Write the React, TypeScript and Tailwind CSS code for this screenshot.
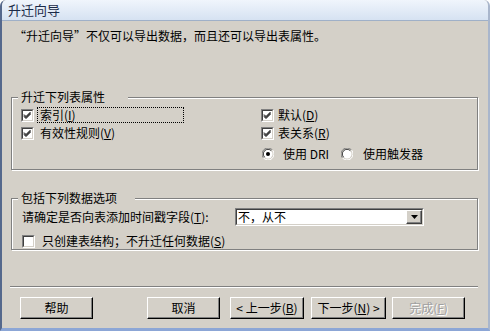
import React from "react";

const FONT = { fontFamily: '"Noto Sans CJK SC", "Noto Sans", sans-serif' };

function CheckBox({ checked }: { checked: boolean }) {
  return (
    <div className="w-[13px] h-[13px] shrink-0 border-t border-l border-t-[#808080] border-l-[#808080] border-b border-r border-b-white border-r-white">
      <div className="w-[11px] h-[11px] border-t border-l border-t-[#404040] border-l-[#404040] border-b border-r border-b-[#d4d0c8] border-r-[#d4d0c8] bg-white relative">
        {checked && (
          <svg width="9" height="9" viewBox="0 0 9 9" className="absolute left-0 top-0">
            <path d="M1 3.5 L3 5.5 L7.5 1 M1 4.5 L3 6.5 L7.5 2 M1 5.5 L3 7.5 L7.5 3" stroke="#000" strokeWidth="1" fill="none" />
          </svg>
        )}
      </div>
    </div>
  );
}

function Radio({ checked }: { checked: boolean }) {
  return (
    <svg width="12" height="12" viewBox="0 0 12 12" className="shrink-0">
      <path d="M10.5 2 A5.5 5.5 0 0 0 1.5 10" stroke="#808080" strokeWidth="1" fill="none" />
      <path d="M1.5 10 A5.5 5.5 0 0 0 10.5 2" stroke="#ffffff" strokeWidth="1" fill="none" />
      <circle cx="6" cy="6" r="4.5" fill="#ffffff" />
      <path d="M9.3 2.7 A4.5 4.5 0 0 0 2.7 9.3" stroke="#404040" strokeWidth="1" fill="none" />
      {checked && <circle cx="6" cy="6" r="2" fill="#000" />}
    </svg>
  );
}

function Btn({ children, w, ml, disabled }: { children: React.ReactNode; w: string; ml: string; disabled?: boolean }) {
  return (
    <div
      className={`${w} ${ml} h-[22px] shrink-0 border-t border-l border-t-white border-l-white border-b border-r border-b-[#000000] border-r-[#000000] shadow-[inset_-1px_-1px_0_#808080] flex items-center justify-center text-[12px] leading-[14px] ${
        disabled ? "text-[#a0a0a0] [text-shadow:1px_1px_0_#ffffff]" : "text-black"
      }`}
    >
      {children}
    </div>
  );
}

export default function App() {
  return (
    <div
      style={FONT}
      className="w-[490px] h-[331px] flex flex-col bg-[#d4d0c8] rounded-t-[6px] overflow-hidden border-l-2 border-l-[#55688c] border-r-2 border-r-[#a9b6cc] border-b-[3px] border-b-[#8ca6d6] text-black"
    >
      {/* title bar */}
      <div className="h-[21px] shrink-0 bg-gradient-to-b from-[#f0f5fc] to-[#d6e2f2] border-b border-b-[#9fb0c8] flex items-center pl-[6px]">
        <span className="text-[13px] leading-[16px] text-[#1b2a48]">升迁向导</span>
      </div>

      <div className="flex flex-col pl-[9px]">
        <div className="mt-[8px] ml-[3px] text-[12px] leading-[14px]">
          “升迁向导”不仅可以导出数据，而且还可以导出表属性。
        </div>

        {/* group 1 */}
        <div className="relative mt-[54px] w-[467px] h-[73px] border border-[#808080] shadow-[inset_1px_1px_0_#ffffff,1px_1px_0_#ffffff] text-[12px] leading-[14px]">
          <div className="absolute top-[-8px] left-[6px] w-[110px] pl-[3px] bg-[#d4d0c8] leading-[14px]">升迁下列表属性</div>
          <div className="grid grid-cols-[240px_1fr] pt-[8px] pl-[9px]">
            <div className="flex flex-col">
              <div className="h-[18px] flex items-center">
                <CheckBox checked />
                <div className="ml-[3px] w-[147px] h-[16px] border border-dotted border-[#000] px-[2px] leading-[14px]">
                  索引(<u>I</u>)
                </div>
              </div>
              <div className="h-[18px] flex items-center">
                <CheckBox checked />
                <div className="ml-[3px] h-[16px] border border-transparent px-[2px] leading-[14px]">
                  有效性规则(<u>V</u>)
                </div>
              </div>
            </div>
            <div className="flex flex-col">
              <div className="h-[18px] flex items-center">
                <CheckBox checked />
                <div className="ml-[1px] h-[16px] border border-transparent px-[2px] leading-[14px]">
                  默认(<u>D</u>)
                </div>
              </div>
              <div className="h-[18px] flex items-center">
                <CheckBox checked />
                <div className="ml-[1px] h-[16px] border border-transparent px-[2px] leading-[14px]">
                  表关系(<u>R</u>)
                </div>
              </div>
              <div className="h-[18px] mt-[3px] flex items-center">
                <div className="ml-[1px]"><Radio checked /></div>
                <div className="ml-[9px] w-[58px]">使用 DRI</div>
                <Radio checked={false} />
                <div className="ml-[10px]">使用触发器</div>
              </div>
            </div>
          </div>
        </div>

        {/* group 2 */}
        <div className="relative mt-[28px] w-[467px] h-[52px] border border-[#808080] shadow-[inset_1px_1px_0_#ffffff,1px_1px_0_#ffffff] text-[12px] leading-[14px]">
          <div className="absolute top-[-8px] left-[6px] w-[117px] pl-[3px] bg-[#d4d0c8] leading-[14px]">包括下列数据选项</div>
          <div className="flex flex-col pt-[9px] pl-[10px]">
            <div className="h-[18px] flex items-center">
              <div className="w-[213px]">
                请确定是否向表添加时间戳字段(<u>T</u>):
              </div>
              <div className="w-[189px] h-[18px] border-t border-l border-t-[#808080] border-l-[#808080] border-b border-r border-b-white border-r-white">
                <div className="h-[16px] border-t border-l border-t-[#404040] border-l-[#404040] border-b border-r border-b-[#d4d0c8] border-r-[#d4d0c8] bg-white flex items-center justify-between">
                  <span className="pl-[1px] leading-[14px]">不，从不</span>
                  <div className="w-[16px] h-[14px] bg-[#d4d0c8] border-t border-l border-t-white border-l-white border-b border-r border-b-[#404040] border-r-[#404040] shadow-[inset_-1px_-1px_0_#808080] flex items-center justify-center">
                    <svg width="7" height="4" viewBox="0 0 7 4">
                      <path d="M0 0 H7 L3.5 4 Z" fill="#000" />
                    </svg>
                  </div>
                </div>
              </div>
            </div>
            <div className="h-[14px] mt-[8px] flex items-center">
              <CheckBox checked={false} />
              <div className="ml-[4px] h-[16px] border border-transparent px-[2px] leading-[14px]">
                只创建表结构；不升迁任何数据(<u>S</u>)
              </div>
            </div>
          </div>
        </div>

        {/* separator */}
        <div className="mt-[36px] ml-[-1px] w-[468px] border-t border-t-[#808080] border-b border-b-white" />

        {/* buttons */}
        <div className="mt-[9px] flex">
          <Btn w="w-[73px]" ml="ml-[9px]">帮助</Btn>
          <Btn w="w-[73px]" ml="ml-[54px]">取消</Btn>
          <Btn w="w-[74px]" ml="ml-[10px]">&lt; 上一步(<u>B</u>)</Btn>
          <Btn w="w-[75px]" ml="ml-[7px]">下一步(<u>N</u>) &gt;</Btn>
          <Btn w="w-[73px]" ml="ml-[6px]" disabled>完成(<u>F</u>)</Btn>
        </div>
      </div>
    </div>
  );
}
